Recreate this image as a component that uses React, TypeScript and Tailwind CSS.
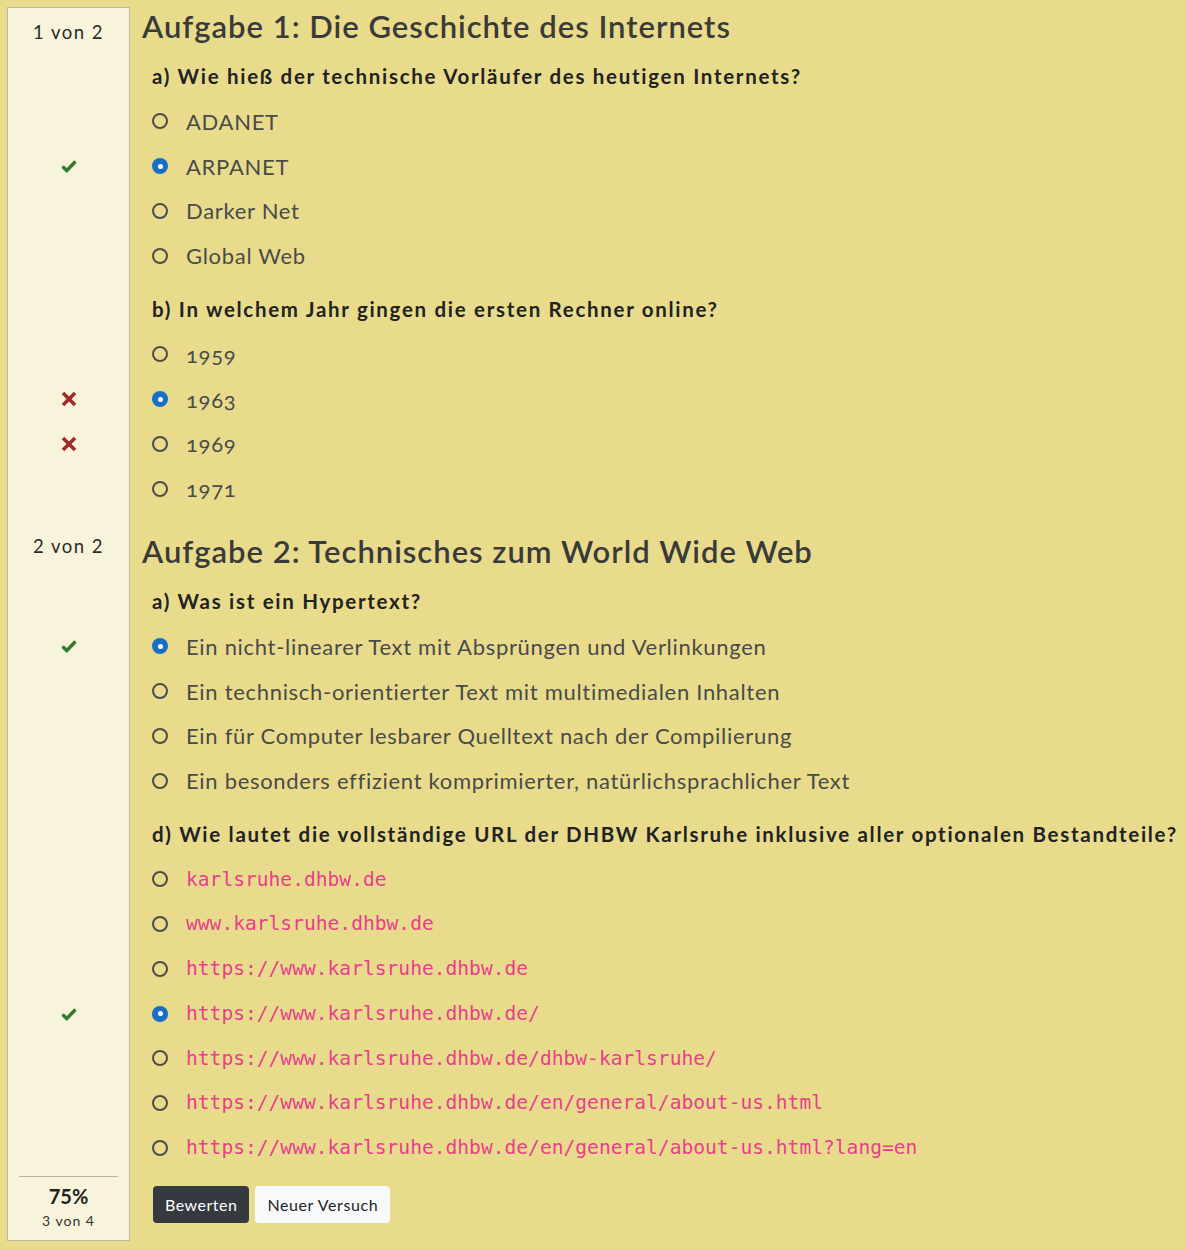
import React from "react";

type Mark = "ok" | "bad" | undefined;
type Row =
  | { kind: "heading"; text: string; side: string; first: boolean }
  | { kind: "question"; text: string; afterHeading: boolean }
  | { kind: "option"; text: string; checked?: boolean; code?: boolean; mark?: Mark };

const rows: Row[] = [
  { kind: "heading", text: "Aufgabe 1: Die Geschichte des Internets", side: "1 von 2", first: true },
  { kind: "question", text: "a) Wie hieß der technische Vorläufer des heutigen Internets?", afterHeading: true },
  { kind: "option", text: "ADANET" },
  { kind: "option", text: "ARPANET", checked: true, mark: "ok" },
  { kind: "option", text: "Darker Net" },
  { kind: "option", text: "Global Web" },
  { kind: "question", text: "b) In welchem Jahr gingen die ersten Rechner online?", afterHeading: false },
  { kind: "option", text: "1959" },
  { kind: "option", text: "1963", checked: true, mark: "bad" },
  { kind: "option", text: "1969", mark: "bad" },
  { kind: "option", text: "1971" },
  { kind: "heading", text: "Aufgabe 2: Technisches zum World Wide Web", side: "2 von 2", first: false },
  { kind: "question", text: "a) Was ist ein Hypertext?", afterHeading: true },
  { kind: "option", text: "Ein nicht-linearer Text mit Absprüngen und Verlinkungen", checked: true, mark: "ok" },
  { kind: "option", text: "Ein technisch-orientierter Text mit multimedialen Inhalten" },
  { kind: "option", text: "Ein für Computer lesbarer Quelltext nach der Compilierung" },
  { kind: "option", text: "Ein besonders effizient komprimierter, natürlichsprachlicher Text" },
  { kind: "question", text: "d) Wie lautet die vollständige URL der DHBW Karlsruhe inklusive aller optionalen Bestandteile?", afterHeading: false },
  { kind: "option", text: "karlsruhe.dhbw.de", code: true },
  { kind: "option", text: "www.karlsruhe.dhbw.de", code: true },
  { kind: "option", text: "https://www.karlsruhe.dhbw.de", code: true },
  { kind: "option", text: "https://www.karlsruhe.dhbw.de/", code: true, checked: true, mark: "ok" },
  { kind: "option", text: "https://www.karlsruhe.dhbw.de/dhbw-karlsruhe/", code: true },
  { kind: "option", text: "https://www.karlsruhe.dhbw.de/en/general/about-us.html", code: true },
  { kind: "option", text: "https://www.karlsruhe.dhbw.de/en/general/about-us.html?lang=en", code: true },
];

const SANS = "font-['Lato','Noto_Sans',sans-serif]";

function Check() {
  return (
    <svg width="16" height="14" viewBox="0 0 16 14">
      <polyline points="1.5,7.5 5.8,11.5 14.5,2.5" fill="none" stroke="#2f7a34" strokeWidth="3.4" />
    </svg>
  );
}

function Cross() {
  return (
    <svg width="16" height="16" viewBox="0 0 16 16">
      <line x1="2" y1="2" x2="14" y2="14" stroke="#9e2b2b" strokeWidth="3.6" />
      <line x1="14" y1="2" x2="2" y2="14" stroke="#9e2b2b" strokeWidth="3.6" />
    </svg>
  );
}

function Radio({ checked }: { checked?: boolean }) {
  if (checked) {
    return (
      <span className="flex h-[16px] w-[16px] shrink-0 items-center justify-center rounded-full bg-[#1a6ec6]">
        <span className="h-[5px] w-[5px] rounded-full bg-white" />
      </span>
    );
  }
  return <span className="h-[16px] w-[16px] shrink-0 rounded-full border-2 border-[#4d4d4a]" />;
}

function Side({ children, className = "" }: { children?: React.ReactNode; className?: string }) {
  return (
    <div className={`w-[123px] shrink-0 border-x border-[#bdb9a0] bg-[#f8f4dc] ${className}`}>{children}</div>
  );
}

export default function App() {
  return (
    <div className={`min-h-[1249px] bg-[#e8dc8c] px-[7px] pt-[7px] ${SANS}`}>
      <div className="flex flex-col">
        {rows.map((r, i) => {
          if (r.kind === "heading") {
            return (
              <div key={i} className="flex">
                <Side className={r.first ? "border-t" : ""}>
                  {r.first ? null : <div className="h-[21px]" />}
                  <div
                    className={`${r.first ? "h-[39px] pt-[12px]" : "h-[40px] pt-[2px]"} text-center text-[18.5px] leading-[24px] tracking-[1.5px] text-[#2a2a2a]`}
                  >
                    {r.side}
                  </div>
                </Side>
                <div className="flex flex-1 flex-col pl-[12px]">
                  {r.first ? null : <div className="h-[21px]" />}
                  <div className="flex h-[39px] items-center whitespace-nowrap text-[31px] font-semibold tracking-[1px] text-[#3a3a38]">
                    {r.text}
                  </div>
                </div>
              </div>
            );
          }
          if (r.kind === "question") {
            const pad = r.afterHeading ? "h-[7px]" : "h-[9px]";
            return (
              <div key={i} className="flex">
                <Side>
                  <div className={pad} />
                  <div className="h-[45px]" />
                </Side>
                <div className="flex flex-1 flex-col pl-[22px]">
                  <div className={pad} />
                  <div className="flex h-[45px] items-center whitespace-nowrap text-[20.5px] font-bold tracking-[1.7px] text-[#222222]">
                    {r.text}
                  </div>
                </div>
              </div>
            );
          }
          return (
            <div key={i} className="flex h-[44.75px]">
              <Side className="flex items-center justify-center">
                {r.mark === "ok" ? <Check /> : r.mark === "bad" ? <Cross /> : null}
              </Side>
              <div className="flex flex-1 items-center gap-[18px] pl-[22px]">
                <Radio checked={r.checked} />
                {r.code ? (
                  <span className="whitespace-nowrap font-['DejaVu_Sans_Mono',monospace] text-[19.6px] text-[#e83e8c]">
                    {r.text}
                  </span>
                ) : (
                  <span className="whitespace-nowrap text-[22px] tracking-[0.7px] text-[#4a4a48] oldstyle-nums">
                    {r.text}
                  </span>
                )}
              </div>
            </div>
          );
        })}
        <div className="flex">
          <Side className="h-[71px] border-b px-[11px] pt-[6px]">
            <div className="border-t border-[#b5b3a4] pt-[6px] text-center">
              <div className="text-[20px] font-bold leading-[26px] text-[#222]">75%</div>
              <div className="text-[14px] leading-[24px] tracking-[1px] text-[#333]">3 von 4</div>
            </div>
          </Side>
          <div className="flex flex-1 items-start gap-[6px] pl-[23px] pt-[16px]">
            <button className="h-[37px] rounded-[4px] bg-[#343a40] px-[12px] text-[16px] tracking-[0.5px] text-white">
              Bewerten
            </button>
            <button className="h-[37px] rounded-[4px] bg-[#f8f9fa] px-[12px] text-[16px] tracking-[0.6px] text-[#212529]">
              Neuer Versuch
            </button>
          </div>
        </div>
      </div>
    </div>
  );
}
